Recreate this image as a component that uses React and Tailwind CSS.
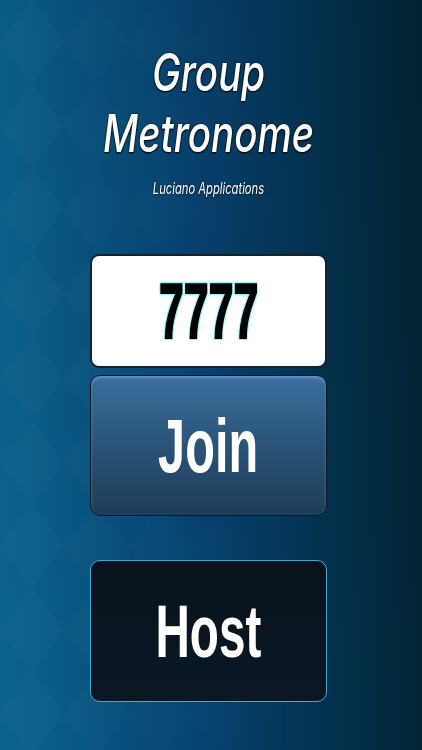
export default function App() {
  return (
    <div className="relative min-h-[750px] w-full overflow-hidden bg-linear-to-r from-[#0b6490] via-[#06416f] to-[#022636]">
      <svg className="absolute inset-0 h-full w-full" aria-hidden="true">
        <defs>
          <pattern id="dia" width="64" height="84" patternUnits="userSpaceOnUse">
            <polygon points="32,0 64,42 32,84 0,42" fill="#ffffff" fillOpacity="0.022" />
          </pattern>
          <linearGradient id="fade" x1="0" y1="0" x2="1" y2="0">
            <stop offset="0" stopColor="#fff" stopOpacity="1" />
            <stop offset="0.6" stopColor="#fff" stopOpacity="0.3" />
            <stop offset="1" stopColor="#fff" stopOpacity="0" />
          </linearGradient>
          <linearGradient id="shade" x1="0" y1="0" x2="0" y2="1">
            <stop offset="0" stopColor="#000" stopOpacity="0.08" />
            <stop offset="1" stopColor="#000" stopOpacity="0" />
          </linearGradient>
          <mask id="m">
            <rect width="100%" height="100%" fill="url(#fade)" />
          </mask>
        </defs>
        <rect width="100%" height="100%" fill="url(#shade)" />
        <rect width="100%" height="100%" fill="url(#dia)" mask="url(#m)" />
      </svg>

      <div className="relative flex flex-col items-center pt-[42px] pr-[5px]">
        <h1
          className="scale-x-[0.74] text-center text-[52px] leading-[61px] font-medium italic text-white [text-shadow:0_0_2px_#000,0_1px_2px_#000]"
          style={{ fontFamily: 'Inter, "Noto Sans", sans-serif' }}
        >
          Group
          <br />
          Metronome
        </h1>
        <p
          className="mt-[14px] scale-x-[0.7] text-[16px] leading-[20px] italic text-white [text-shadow:0_0_2px_#000]"
          style={{ fontFamily: 'Inter, "Noto Sans", sans-serif' }}
        >
          Luciano Applications
        </p>

        <div className="mt-[56px] flex h-[114px] w-[237px] items-center justify-center rounded-[9px] border-2 border-[#14222c] bg-white">
          <span
            className="scale-x-[0.58] text-[77px] leading-none font-bold text-black [-webkit-text-stroke:2px_#000] [text-shadow:2px_0_1px_#8ff3f7,-2px_0_1px_#8ff3f7,0_2px_1px_#8ff3f7,0_-2px_1px_#8ff3f7,2px_2px_1px_#8ff3f7,-2px_-2px_1px_#8ff3f7,2px_-2px_1px_#8ff3f7,-2px_2px_1px_#8ff3f7]"
            style={{ fontFamily: '"Liberation Sans", Arial, sans-serif' }}
          >
            7777
          </span>
        </div>

        <button className="mt-[7px] flex h-[141px] w-[237px] items-center justify-center rounded-[10px] border-[1.5px] border-[#0b1722] bg-linear-to-b from-[#3b6f9e] via-[#2a5378] to-[#1d3d58] shadow-[inset_0_2px_3px_rgba(140,190,230,0.5)]">
          <span
            className="scale-x-[0.64] text-[76px] leading-none font-bold text-white"
            style={{ fontFamily: '"Liberation Sans", Arial, sans-serif' }}
          >
            Join
          </span>
        </button>

        <button className="mt-[44px] flex h-[142px] w-[237px] items-center justify-center rounded-[10px] border-[1.5px] border-[#4aa6cc] bg-linear-to-b from-[#08121c] to-[#0b1824]">
          <span
            className="scale-x-[0.635] text-[75px] leading-none font-bold text-white"
            style={{ fontFamily: '"Liberation Sans", Arial, sans-serif' }}
          >
            Host
          </span>
        </button>
      </div>
    </div>
  )
}
